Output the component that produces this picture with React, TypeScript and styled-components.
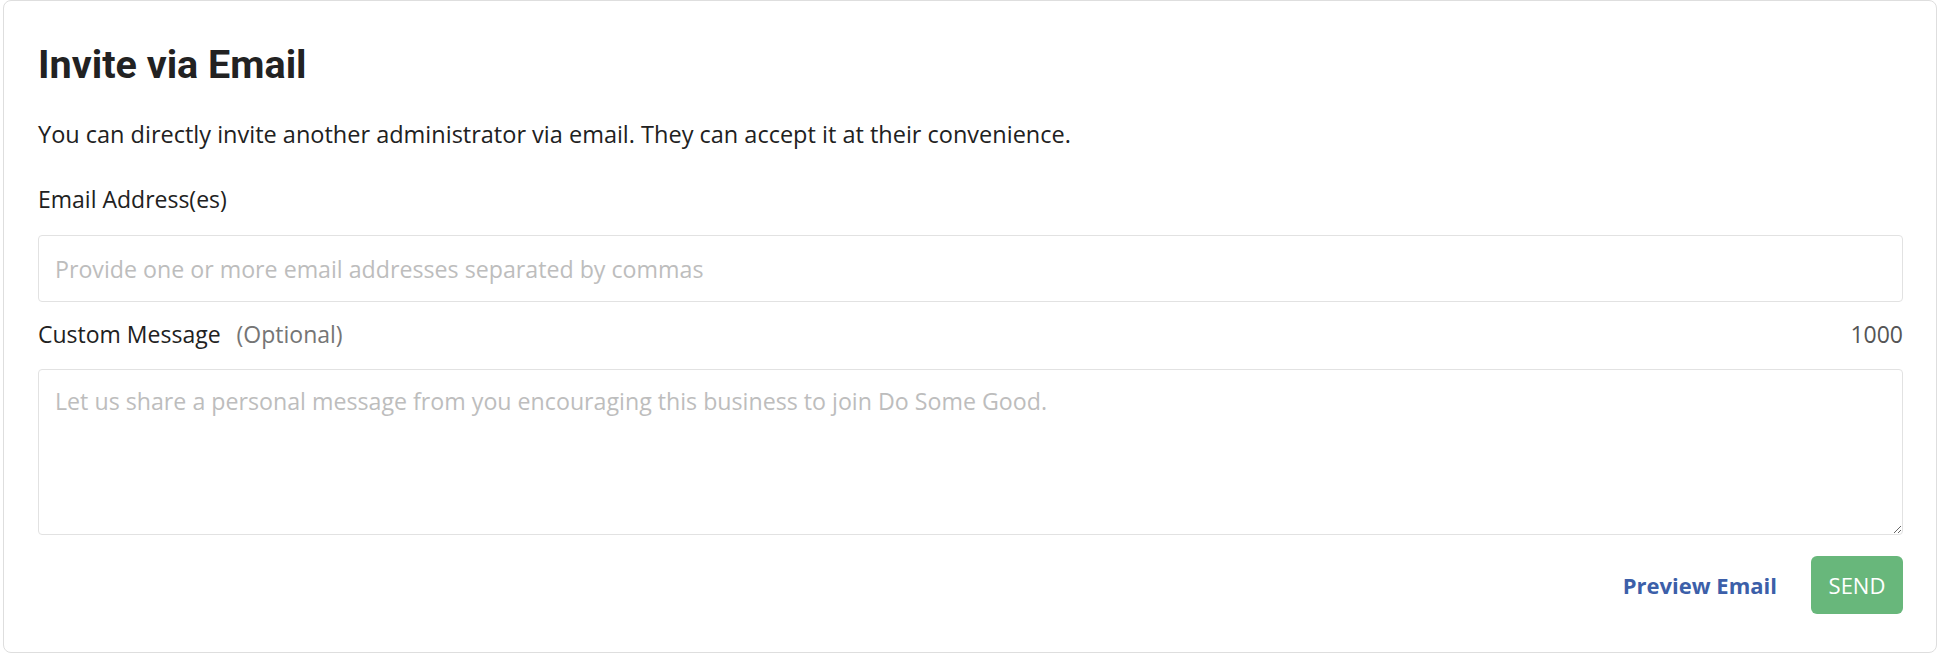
import styled, { createGlobalStyle } from 'styled-components';

const FONT = '"Open Sans", "Noto Sans", sans-serif';

const GlobalStyle = createGlobalStyle`
  html, body {
    margin: 0;
    padding: 0;
    background: #ffffff;
  }

  body {
    font-family: ${FONT};
    color: #212121;
    -webkit-font-smoothing: antialiased;
  }

  * {
    box-sizing: border-box;
  }
`;

const Page = styled.div`
  padding: 0 21px 0 3px;
`;

const Card = styled.section`
  border: 1px solid #dedede;
  border-radius: 8px;
  padding: 40px 33px 38px 34px;
  background: #ffffff;
`;

const Title = styled.h2`
  margin: 0;
  font-family: Roboto, ${FONT};
  font-size: 39.5px;
  line-height: 48px;
  font-weight: 700;
  color: #222222;
`;

const Intro = styled.p`
  margin: 29px 0 0;
  font-size: 23.5px;
  line-height: 32px;
  color: #212121;
`;

const Field = styled.div<{ $gap: number }>`
  margin-top: ${(p) => p.$gap}px;
  display: flex;
  flex-direction: column;
`;

const LabelRow = styled.div`
  display: flex;
  align-items: baseline;
  justify-content: space-between;
  font-size: 23px;
  line-height: 32px;
`;

const Label = styled.label`
  color: #212121;
`;

const Optional = styled.span`
  margin-left: 16px;
  color: #757575;
`;

const Counter = styled.span`
  color: #555555;
`;

const inputBase = `
  width: 100%;
  border: 1px solid #e2e2e2;
  border-radius: 4px;
  background: #ffffff;
  font-family: ${FONT};
  font-size: 23.2px;
  color: #212121;
  outline: none;

  &::placeholder {
    color: #bdbdbd;
  }
`;

const TextInput = styled.input`
  ${inputBase}
  margin-top: 20px;
  height: 67px;
  padding: 0 16px;
`;

const TextArea = styled.textarea`
  ${inputBase}
  display: block;
  margin-top: 19px;
  height: 166px;
  padding: 15px 16px;
  line-height: 32px;
  resize: vertical;
`;

const Actions = styled.div`
  margin-top: 21px;
  display: flex;
  justify-content: flex-end;
  align-items: center;
  gap: 34px;
`;

const LinkButton = styled.button`
  border: none;
  background: none;
  padding: 0;
  font-family: ${FONT};
  font-size: 22px;
  font-weight: 700;
  color: #3c5fa9;
  cursor: pointer;
`;

const SendButton = styled.button`
  width: 92px;
  height: 58px;
  border: none;
  border-radius: 6px;
  background: #68b77b;
  color: #ffffff;
  font-family: ${FONT};
  font-size: 22px;
  cursor: pointer;
`;

export default function App() {
  return (
    <>
      <GlobalStyle />
      <Page>
        <Card>
          <Title>Invite via Email</Title>
          <Intro>
            You can directly invite another administrator via email. They can accept it at their convenience.
          </Intro>

          <Field $gap={33}>
            <LabelRow>
              <Label htmlFor="invite-emails">Email Address(es)</Label>
            </LabelRow>
            <TextInput
              id="invite-emails"
              type="text"
              placeholder="Provide one or more email addresses separated by commas"
            />
          </Field>

          <Field $gap={16}>
            <LabelRow>
              <Label htmlFor="invite-message">
                Custom Message<Optional>(Optional)</Optional>
              </Label>
              <Counter>1000</Counter>
            </LabelRow>
            <TextArea
              id="invite-message"
              placeholder="Let us share a personal message from you encouraging this business to join Do Some Good."
            />
          </Field>

          <Actions>
            <LinkButton type="button">Preview Email</LinkButton>
            <SendButton type="button">SEND</SendButton>
          </Actions>
        </Card>
      </Page>
    </>
  );
}
